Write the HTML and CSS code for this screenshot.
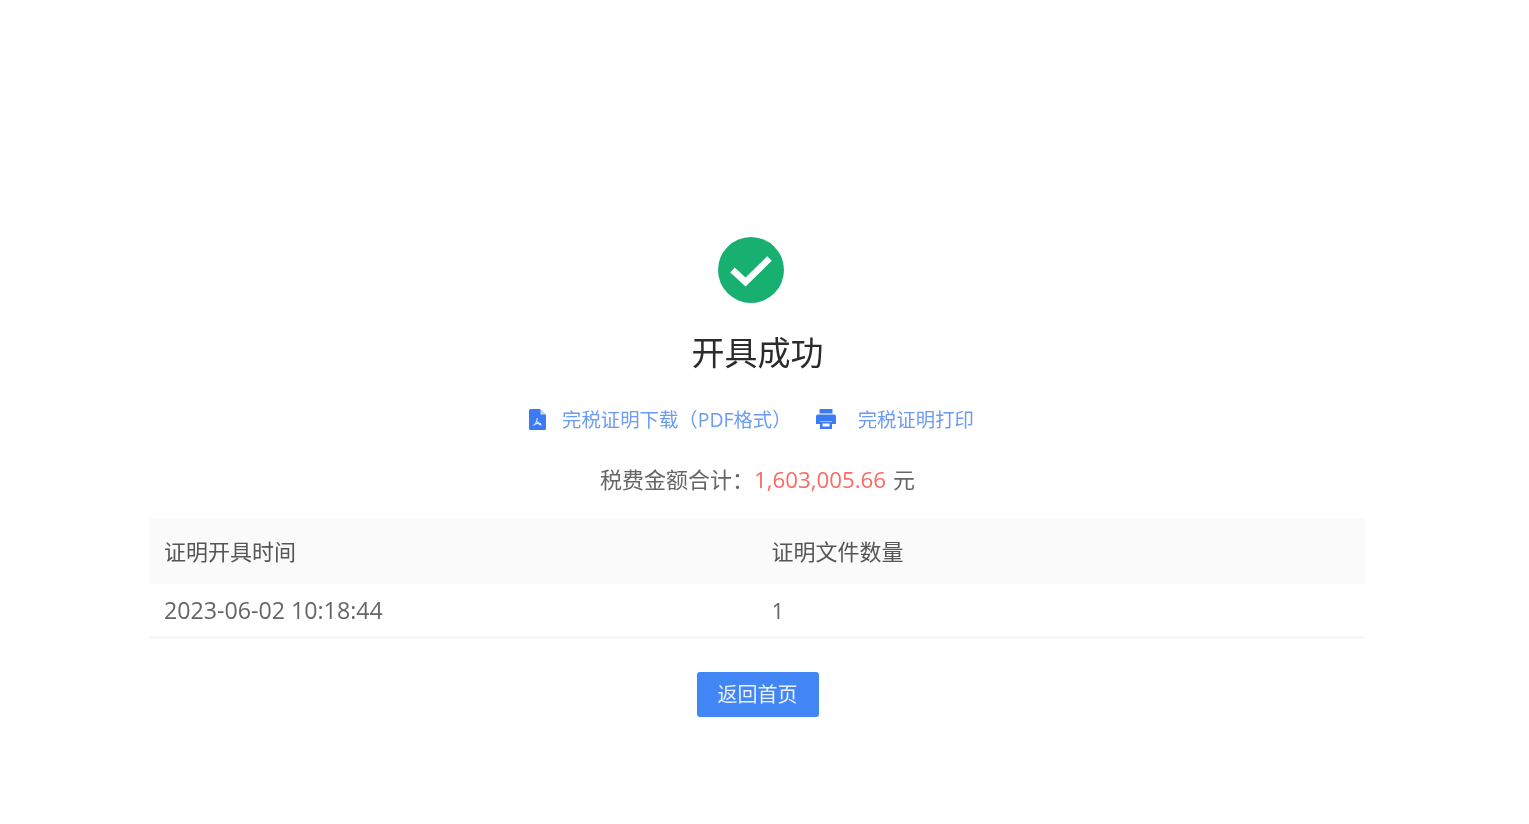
FILE: index.html
```html
<!DOCTYPE html>
<html lang="zh-CN">
<head>
  <meta charset="UTF-8">
  <title>开具成功</title>
  <link rel="stylesheet" href="styles.css">
</head>
<body>
  <div class="container">
    <svg class="success-icon" xmlns="http://www.w3.org/2000/svg" viewBox="0 0 66 66">
      <circle cx="33" cy="33" r="33" fill="#18b071"></circle>
      <path d="M14.5 33 L27.5 45 L51.5 21.5" fill="none" stroke="#fff" stroke-width="6.5"></path>
    </svg>
    <h1>开具成功</h1>

    <div class="links">
      <a class="link link-pdf">
        <svg class="link-icon" xmlns="http://www.w3.org/2000/svg" viewBox="0 0 17 21">
          <path d="M1.5 0 H11 L17 6 V19.5 A1.5 1.5 0 0 1 15.5 21 H1.5 A1.5 1.5 0 0 1 0 19.5 V1.5 A1.5 1.5 0 0 1 1.5 0 Z" fill="#3b7cf6"></path>
          <path d="M11.5 0.5 V5.5 H16.5 Z" fill="#c4d8fc"></path>
          <path d="M8.3 9 C7.9 12 6.9 15 4.5 16.5 M8.3 12.5 C9 14.5 10.5 15.7 12.5 16 M5.5 15.5 C7.5 14.5 10 14.1 12 14.5" fill="none" stroke="#dfe9fd" stroke-width="1.1"></path>
        </svg>
        <span>完税证明下载（PDF格式）</span>
      </a>
      <a class="link link-print">
        <svg class="link-icon-print" xmlns="http://www.w3.org/2000/svg" viewBox="0 0 20 20">
          <path d="M3.5 0 H16.5 V4.5 H3.5 Z" fill="#3b7cf6"></path>
          <path d="M2 5.5 H18 A2 2 0 0 1 20 7.5 V15 H16 V12 H4 V15 H0 V7.5 A2 2 0 0 1 2 5.5 Z" fill="#3b7cf6"></path>
          <path d="M4 12.5 H16 V20 H4 Z M6.5 14.5 V17.5 H13.5 V14.5 Z" fill="#3b7cf6" fill-rule="evenodd"></path>
        </svg>
        <span>完税证明打印</span>
      </a>
    </div>

    <p class="total">税费金额合计：<span class="amount">1,603,005.66</span><span class="unit">元</span></p>

    <div class="table">
      <div class="row row-head">
        <div class="cell">证明开具时间</div>
        <div class="cell">证明文件数量</div>
      </div>
      <div class="row row-body">
        <div class="cell cell-time">2023-06-02 10:18:44</div>
        <div class="cell">1</div>
      </div>
    </div>

    <button class="back-button">返回首页</button>
  </div>
</body>
</html>
```

FILE: styles.css
```css
body {
  font-family: "Open Sans", "Noto Sans CJK SC", sans-serif;
  background-color: white;
  color: #666;
  margin: 0;
}

/* the source shot is an upscaled, soft image */
.container {
  width: 1215px;
  margin-left: 150px;
  padding-top: 237px;
  display: flex;
  flex-direction: column;
  align-items: center;
  filter: blur(0.5px);
}

.success-icon {
  width: 66px;
  height: 66px;
  margin-right: 13px;
}

h1 {
  font-size: 33px;
  line-height: 44px;
  font-weight: 400;
  color: #2b2b2b;
  margin: 28px 0 0;
}

.links {
  display: flex;
  align-items: center;
  margin-top: 27px;
  margin-right: 12px;
  height: 32px;
  font-size: 19.4px;
  color: #6b9bf5;
}

.link {
  display: flex;
  align-items: center;
}

.link-icon {
  width: 17px;
  height: 21px;
  margin-top: 2px;
  margin-right: 16px;
}

.link-icon-print {
  width: 20px;
  height: 20px;
  margin-top: 2px;
  margin-right: 22px;
}

.link-pdf {
  margin-right: 24px;
}

.total {
  font-size: 22px;
  line-height: 32px;
  margin: 29px 0 0;
}

.amount {
  font-size: 22.3px;
  color: #f96a62;
}

.unit {
  margin-left: 7px;
}

.table {
  width: 100%;
  margin-top: 22px;
  font-size: 22px;
}

.row {
  display: grid;
  grid-template-columns: 1fr 1fr;
  align-items: center;
}

.cell {
  padding-left: 14px;
}

.cell-time {
  font-size: 23.2px;
}

.row-head {
  height: 64px;
  padding-bottom: 2px;
  background-color: #fafafa;
  color: #555;
}

.row-body {
  height: 52px;
  border-bottom: 3px solid #f7f7f7;
}

.back-button {
  width: 122px;
  height: 45px;
  margin-top: 33px;
  padding: 0 0 2px;
  background-color: #4285f4;
  color: #e8f0fe;
  border: none;
  border-radius: 3px;
  font-family: inherit;
  font-size: 20px;
}
```
